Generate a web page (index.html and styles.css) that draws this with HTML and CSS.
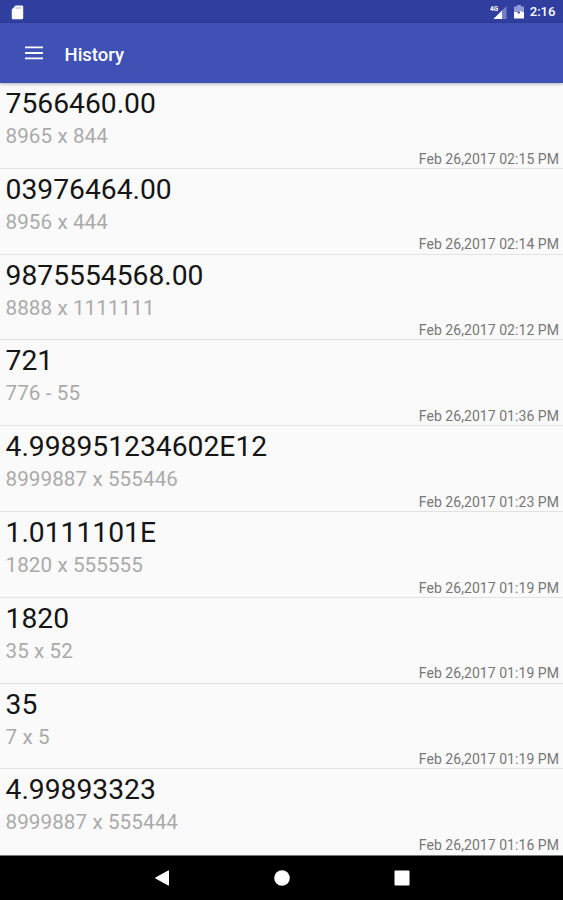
FILE: index.html
```
<!DOCTYPE html>
<html lang="en">
<head>
<meta charset="utf-8">
<title>History</title>
<link rel="stylesheet" href="styles.css">
</head>
<body>
<div class="screen">
  <header class="status">
    <svg class="sd" width="13" height="15" viewBox="0 0 13 15"><path d="M4.6.6H11Q12.2.6 12.2 1.8V13Q12.2 14.2 11 14.2H2Q.8 14.2.8 13V4.6Z" fill="#fff"/><path d="M5.2 2v2M7.2 2v2M9.2 2v2" stroke="#a9b0dc" stroke-width="1"/></svg>
    <div class="status-right">
      <svg class="signal" width="17" height="15" viewBox="0 0 17 15"><path d="M16.5 1V14H3.5Z" fill="#7580c6"/><path d="M12 5.5V14H3.5Z" fill="#fff"/><text x="0" y="6" class="network">4G</text></svg>
      <svg class="battery" width="10" height="14" viewBox="0 0 10 14"><path d="M3 0H7V1.5H10V7H0V1.5H3Z" fill="#929bd2"/><path d="M0 7H3L5 9 7 5.5 8 7H10V13.5H0Z" fill="#fff"/></svg>
      <span class="clock">2:16</span>
    </div>
  </header>
  <div class="toolbar">
    <svg class="menu" width="18" height="14" viewBox="0 0 18 14"><path d="M0 1.4H18M0 7H18M0 12.4H18" stroke="#fff" stroke-width="1.8"/></svg>
    <h1>History</h1>
  </div>
  <main class="list">
    <article><p class="result">7566460.00</p><p class="expr">8965 x 844</p><time>Feb 26,2017 02:15 PM</time></article>
    <article><p class="result">03976464.00</p><p class="expr">8956 x 444</p><time>Feb 26,2017 02:14 PM</time></article>
    <article><p class="result">9875554568.00</p><p class="expr">8888 x 1111111</p><time>Feb 26,2017 02:12 PM</time></article>
    <article><p class="result">721</p><p class="expr">776 - 55</p><time>Feb 26,2017 01:36 PM</time></article>
    <article><p class="result">4.998951234602E12</p><p class="expr">8999887 x 555446</p><time>Feb 26,2017 01:23 PM</time></article>
    <article><p class="result">1.0111101E</p><p class="expr">1820 x 555555</p><time>Feb 26,2017 01:19 PM</time></article>
    <article><p class="result">1820</p><p class="expr">35 x 52</p><time>Feb 26,2017 01:19 PM</time></article>
    <article><p class="result">35</p><p class="expr">7 x 5</p><time>Feb 26,2017 01:19 PM</time></article>
    <article><p class="result">4.99893323</p><p class="expr">8999887 x 555444</p><time>Feb 26,2017 01:16 PM</time></article>
  </main>
  <nav class="nav">
    <svg width="16" height="18" viewBox="0 0 16 18"><path d="M14.5 1.8V16.2L1.5 9Z" fill="#fff" stroke="#fff" stroke-linejoin="round"/></svg>
    <svg width="16" height="18" viewBox="0 0 16 18"><circle cx="8" cy="9" r="7.8" fill="#fff"/></svg>
    <svg width="16" height="18" viewBox="0 0 16 18"><rect x=".5" y="1.5" width="15" height="15" rx="1" fill="#fff"/></svg>
  </nav>
</div>
</body>
</html>
```

FILE: styles.css
```
* { box-sizing: border-box; }
body { margin: 0; font-family: Roboto, sans-serif; background: #fafafa; }
p, h1 { margin: 0; font-weight: 400; }
svg { display: block; flex: none; }
.screen { width: 563px; height: 900px; display: flex; flex-direction: column; overflow: hidden; }
.status {
  height: 23px; flex: none; background: #303f9f; color: #fff;
  display: flex; justify-content: space-between; align-items: center;
  padding: 1px 7.5px 0 11px;
}
.status-right { display: flex; align-items: center; }
.network { font-size: 6.5px; font-weight: 700; fill: #fff; }
.battery { margin-left: 7px; }
.clock { margin-left: 6px; font-size: 13.1px; font-weight: 500; line-height: 22px; }
.toolbar {
  height: 60px; flex: none; background: #3f51b5; color: #fff; position: relative;
  display: flex; align-items: center; padding-left: 25px;
  box-shadow: 0 1px 3px rgba(0, 0, 0, .3);
}
.toolbar h1 { margin-left: 21.5px; padding-top: 3px; font-size: 18.5px; font-weight: 500; line-height: 24px; }
.list { height: 773px; flex: none; display: grid; grid-template-rows: repeat(8, 85.8px) 1fr; }
article {
  min-height: 0; padding: 4px 4px 0 5.5px; border-bottom: 1px solid #e2e2e2;
  display: flex; flex-direction: column;
}
article:last-child { border-bottom-color: #777; }
.result { font-size: 28.25px; line-height: 33px; color: #151515; }
.expr { font-size: 20.6px; letter-spacing: .1px; line-height: 24px; padding-top: 4px; color: #aaa; }
time { align-self: flex-end; margin-top: 2.6px; font-size: 14px; letter-spacing: .05px; line-height: 16px; color: #777; }
.nav {
  flex: 1; background: #000; display: flex; justify-content: center; align-items: center; gap: 104px;
}
```
